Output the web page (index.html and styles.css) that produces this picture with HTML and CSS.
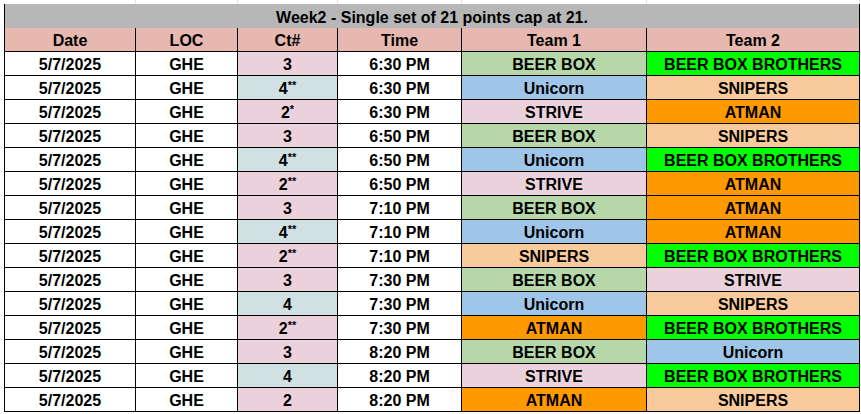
FILE: index.html
```html
<!DOCTYPE html>
<html>
<head>
<meta charset="utf-8">
<link rel="stylesheet" href="styles.css">
</head>
<body>
<div class="page">
  <div class="gridtop">
    <div></div><div></div><div></div><div></div><div></div><div></div>
  </div>
  <div class="sheet">
    <div class="title">Week2 - Single set of 21 points cap at 21.</div>
    <div class="hd">Date</div><div class="hd">LOC</div><div class="hd">Ct#</div><div class="hd">Time</div><div class="hd">Team 1</div><div class="hd">Team 2</div>

    <div>5/7/2025</div><div>GHE</div><div class="c-pink">3</div><div>6:30 PM</div><div class="t-beer">BEER BOX</div><div class="t-bbb">BEER BOX BROTHERS</div>
    <div>5/7/2025</div><div>GHE</div><div class="c-blue">4<sup>**</sup></div><div>6:30 PM</div><div class="t-uni">Unicorn</div><div class="t-snip">SNIPERS</div>
    <div>5/7/2025</div><div>GHE</div><div class="c-pink">2<sup>*</sup></div><div>6:30 PM</div><div class="t-strive">STRIVE</div><div class="t-atman">ATMAN</div>
    <div>5/7/2025</div><div>GHE</div><div class="c-pink">3</div><div>6:50 PM</div><div class="t-beer">BEER BOX</div><div class="t-snip">SNIPERS</div>
    <div>5/7/2025</div><div>GHE</div><div class="c-blue">4<sup>**</sup></div><div>6:50 PM</div><div class="t-uni">Unicorn</div><div class="t-bbb">BEER BOX BROTHERS</div>
    <div>5/7/2025</div><div>GHE</div><div class="c-pink">2<sup>**</sup></div><div>6:50 PM</div><div class="t-strive">STRIVE</div><div class="t-atman">ATMAN</div>
    <div>5/7/2025</div><div>GHE</div><div class="c-pink">3</div><div>7:10 PM</div><div class="t-beer">BEER BOX</div><div class="t-atman">ATMAN</div>
    <div>5/7/2025</div><div>GHE</div><div class="c-blue">4<sup>**</sup></div><div>7:10 PM</div><div class="t-uni">Unicorn</div><div class="t-atman">ATMAN</div>
    <div>5/7/2025</div><div>GHE</div><div class="c-pink">2<sup>**</sup></div><div>7:10 PM</div><div class="t-snip">SNIPERS</div><div class="t-bbb">BEER BOX BROTHERS</div>
    <div>5/7/2025</div><div>GHE</div><div class="c-pink">3</div><div>7:30 PM</div><div class="t-beer">BEER BOX</div><div class="t-strive">STRIVE</div>
    <div>5/7/2025</div><div>GHE</div><div class="c-blue">4</div><div>7:30 PM</div><div class="t-uni">Unicorn</div><div class="t-snip">SNIPERS</div>
    <div>5/7/2025</div><div>GHE</div><div class="c-pink">2<sup>**</sup></div><div>7:30 PM</div><div class="t-atman">ATMAN</div><div class="t-bbb">BEER BOX BROTHERS</div>
    <div>5/7/2025</div><div>GHE</div><div class="c-pink">3</div><div>8:20 PM</div><div class="t-beer">BEER BOX</div><div class="t-uni">Unicorn</div>
    <div>5/7/2025</div><div>GHE</div><div class="c-blue">4</div><div>8:20 PM</div><div class="t-strive">STRIVE</div><div class="t-bbb">BEER BOX BROTHERS</div>
    <div>5/7/2025</div><div>GHE</div><div class="c-pink">2</div><div>8:20 PM</div><div class="t-atman">ATMAN</div><div class="t-snip">SNIPERS</div>
  </div>
</div>
</body>
</html>
```
FILE: styles.css
```css
html, body {
  margin: 0;
  padding: 0;
  background: #fff;
}
.page {
  padding-left: 4px;
  font-family: "Liberation Sans", Arial, sans-serif;
  font-weight: bold;
  font-size: 16px;
  color: #000;
}
.gridtop {
  display: grid;
  grid-template-columns: 131px 102px 100px 124px 185px 213px;
  height: 4px;
  border-left: 1px solid #fff;
}
.gridtop div {
  border-right: 1px solid #e2e2e2;
}
.sheet {
  display: grid;
  grid-template-columns: 131px 102px 100px 124px 185px 213px;
  grid-auto-rows: 24px;
  border-left: 1px solid #000;
  width: max-content;
}
.sheet > div {
  box-sizing: border-box;
  border-right: 1px solid #000;
  border-bottom: 1px solid #000;
  display: flex;
  align-items: center;
  justify-content: center;
  white-space: nowrap;
  line-height: 1;
  padding-top: 3px;
}
.sheet > .title {
  grid-column: 1 / -1;
  height: 25px;
  background: #b7b7b7;
  border-bottom: 1px solid #d0d0d0;
}
.hd { background: #e6b8af; }
.c-pink { background: #ead1dc; }
.c-blue { background: #d0e0e3; }
.t-beer { background: #b6d7a8; }
.t-bbb { background: #00ff00; }
.t-uni { background: #9fc5e8; }
.t-snip { background: #f9cb9c; }
.t-strive { background: #ead1dc; }
.t-atman { background: #ff9900; }
sup {
  font-size: 11px;
  align-self: flex-start;
  margin-top: 1px;
  line-height: 1;
}
```
